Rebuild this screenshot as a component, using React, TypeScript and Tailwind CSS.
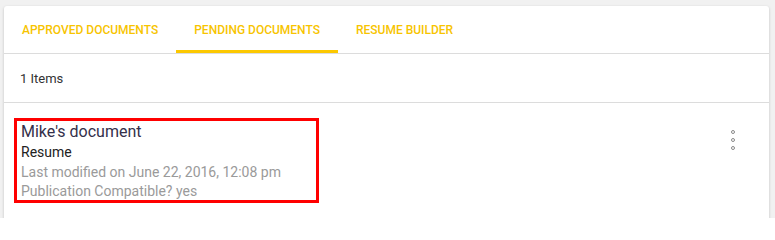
import React from "react";

export default function App() {
  const tabs = [
    { label: "APPROVED DOCUMENTS", active: false },
    { label: "PENDING DOCUMENTS", active: true },
    { label: "RESUME BUILDER", active: false },
  ];
  return (
    <div className="w-[775px] h-[218px] overflow-hidden bg-[#f1f1f1] pt-[6px] pl-[4px] font-['Roboto',sans-serif]">
      <div className="w-[765px] h-[240px] bg-white rounded-[3px] shadow-[0_1px_3px_rgba(0,0,0,0.2)]">
        <div className="flex h-[48px] border-b border-[#dcdcdc]">
          {tabs.map((t) => (
            <div
              key={t.label}
              className={
                t.active
                  ? "h-[47px] px-[18px] flex items-center text-[12px] font-medium text-[#f7c400] border-b-[3px] border-[#fcc800] pt-[3px]"
                  : "h-[47px] px-[18px] flex items-center text-[12px] font-medium text-[#f7c400]"
              }
            >
              {t.label}
            </div>
          ))}
        </div>
        <div className="h-[49px] border-b border-[#dcdcdc] flex items-center pl-[16px] pt-[2px] text-[13px] text-[#333]">
          1 Items
        </div>
        <div className="flex items-start justify-between pt-[15px] pl-[10px] pr-[34px]">
          <div className="w-[305px] h-[85px] border-[3px] border-[#f00] pl-[4px] pt-[1px]">
            <div className="text-[16px] leading-[20px] text-[#34304a]">Mike's document</div>
            <div className="text-[14px] leading-[20px] text-[#222]">Resume</div>
            <div className="text-[14px] leading-[20px] text-[#9a9a9a]">Last modified on June 22, 2016, 12:08 pm</div>
            <div className="text-[14px] leading-[18px] text-[#9a9a9a]">Publication Compatible? yes</div>
          </div>
          <div className="flex flex-col items-center gap-[4px] pt-[12px]">
            <span className="block w-[4px] h-[4px] rounded-full border border-[#8a8a8a]" />
            <span className="block w-[4px] h-[4px] rounded-full border border-[#8a8a8a]" />
            <span className="block w-[4px] h-[4px] rounded-full border border-[#8a8a8a]" />
          </div>
        </div>
      </div>
    </div>
  );
}
